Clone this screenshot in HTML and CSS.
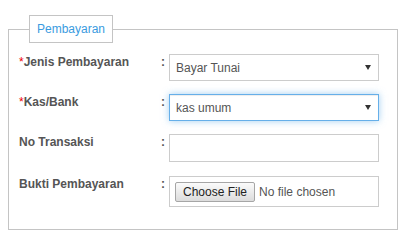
FILE: index.html
```html
<!DOCTYPE html>
<html lang="id">
<head>
    <meta charset="UTF-8">
    <meta name="viewport" content="width=device-width, initial-scale=1.0">
    <title>Pembayaran</title>
    <link rel="stylesheet" href="styles.css">
</head>
<body>
    <div class="page">
        <fieldset class="panel">
            <legend class="panel-title">Pembayaran</legend>

            <div class="form-row">
                <label class="form-label" for="jenisBayar"><span class="req">*</span>Jenis Pembayaran</label>
                <span class="form-sep">:</span>
                <div class="select-wrap">
                    <select id="jenisBayar" class="form-control">
                        <option>Bayar Tunai</option>
                        <option>Transfer</option>
                    </select>
                </div>
            </div>

            <div class="form-row">
                <label class="form-label" for="kasBank"><span class="req">*</span>Kas/Bank</label>
                <span class="form-sep">:</span>
                <div class="select-wrap">
                    <select id="kasBank" class="form-control is-focus">
                        <option>kas umum</option>
                    </select>
                </div>
            </div>

            <div class="form-row">
                <label class="form-label" for="noTransaksi">No Transaksi</label>
                <span class="form-sep">:</span>
                <input type="text" id="noTransaksi" class="form-control text-input">
            </div>

            <div class="form-row file-row">
                <label class="form-label" for="bukti">Bukti Pembayaran</label>
                <span class="form-sep">:</span>
                <div class="file-box">
                    <input type="file" id="bukti" class="file-input">
                </div>
            </div>
        </fieldset>
    </div>
</body>
</html>
```

FILE: styles.css
```css
body {
    margin: 0;
    font-family: "Liberation Sans", Arial, sans-serif;
    font-size: 12px;
    color: #555;
}
.page {
    padding: 15px 0 0 8px;
}
.panel {
    box-sizing: border-box;
    width: 390px;
    margin: 0;
    padding: 11px 10px 22px;
    border: 1px solid #c4c4c4;
    display: flex;
    flex-direction: column;
    gap: 13px;
}
.panel-title {
    margin-left: 10px;
    padding: 6px 7px;
    border: 1px solid #c4c4c4;
    color: #3a9be0;
    line-height: 14px;
}
.form-row {
    display: grid;
    grid-template-columns: 142px 8px 210px;
    align-items: start;
}
.file-row {
    margin-top: 1px;
}
.form-label {
    padding-top: 1px;
    font-weight: bold;
    line-height: 14px;
}
.req {
    color: #e00;
    font-weight: normal;
}
.form-sep {
    padding-top: 1px;
    font-weight: bold;
    line-height: 14px;
}
.form-control {
    box-sizing: border-box;
    width: 100%;
    height: 27px;
    margin: 0;
    padding: 0 6px;
    border: 1px solid #ccc;
    border-radius: 0;
    background: #fff;
    font-family: inherit;
    font-size: 12px;
    color: #555;
    outline: none;
}
.select-wrap {
    position: relative;
}
.select-wrap select {
    appearance: none;
    -webkit-appearance: none;
}
.select-wrap::after {
    content: "";
    position: absolute;
    right: 8px;
    top: 11px;
    border-left: 3px solid transparent;
    border-right: 3px solid transparent;
    border-top: 5px solid #333;
    pointer-events: none;
}
.is-focus {
    border-color: #66afe9;
    box-shadow: inset 0 1px 1px rgba(0, 0, 0, .075), 0 0 7px rgba(102, 175, 233, .6);
}
.text-input {
    height: 28px;
}
.file-box {
    box-sizing: border-box;
    height: 31px;
    padding: 5px;
    border: 1px solid #ccc;
}
.file-input {
    font-family: inherit;
    font-size: 12px;
    color: #555;
    line-height: 14px;
}
.file-input::file-selector-button {
    margin: 0 4px 0 0;
    padding: 2px 7px;
    border: 1px solid #a6a6a6;
    border-radius: 2px;
    background: linear-gradient(#fbfbfb, #dcdcdc);
    font-family: inherit;
    font-size: 12px;
    line-height: 14px;
    color: #222;
}
```
